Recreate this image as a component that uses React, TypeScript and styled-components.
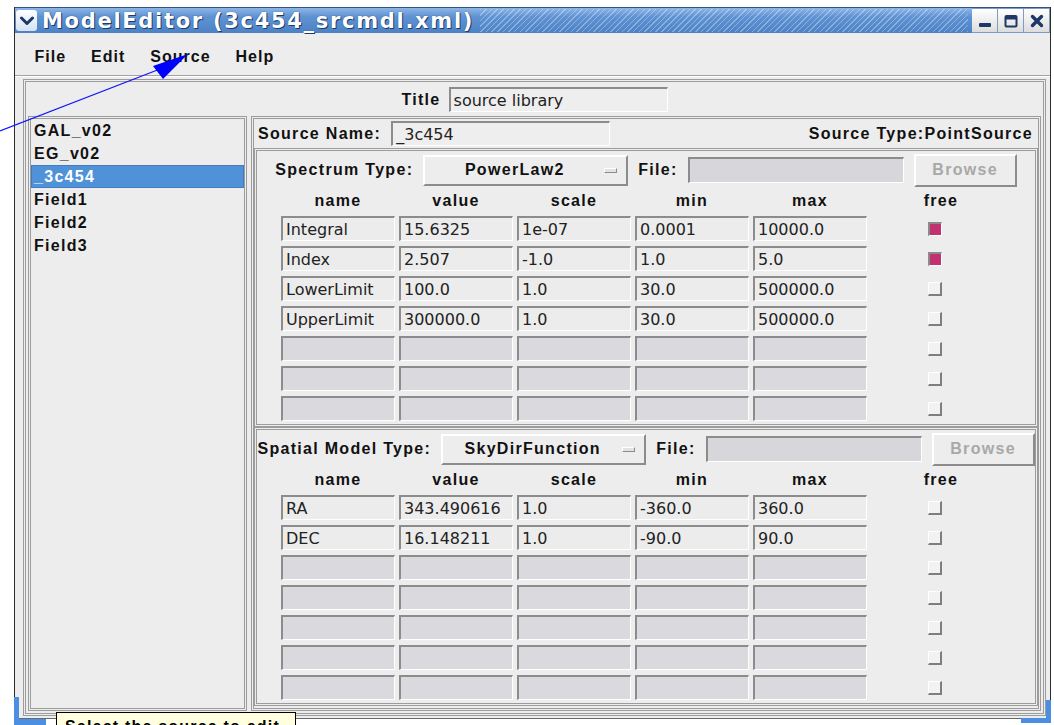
import React from "react";
import styled, { createGlobalStyle, css } from "styled-components";

const BOLD = `"Liberation Sans", Arial, Helvetica, sans-serif`;
const PLAIN = `"DejaVu Sans", "Liberation Sans", sans-serif`;
const PANEL = "#ededed";
const SHADE = "#8c8c8c";

const GlobalStyle = createGlobalStyle`
  html, body { margin: 0; padding: 0; background: #fff; }
  body { font-family: ${BOLD}; color: #111; }
  #root { width: 1054px; height: 725px; overflow: hidden; }
`;

const Screen = styled.div`
  position: relative;
  width: 1054px;
  height: 725px;
  overflow: hidden;
  background: #fff;
  padding: 7px 0 0 14px;
  box-sizing: border-box;
`;

const Window = styled.div`
  width: 1037px;
  height: 712px;
  display: flex;
  flex-direction: column;
  background: ${PANEL};
  border-left: 1px solid #2c2c2c;
  border-right: 1px solid #2c2c2c;
  border-bottom: 1px solid #6a6a6a;
  box-sizing: border-box;
`;

/* ---------- title bar ---------- */

const TitleBar = styled.div`
  flex: none;
  height: 26px;
  display: flex;
  align-items: center;
  background: linear-gradient(180deg, #8db6e6 0%, #5f92d2 35%, #4c82c5 100%);
  border-top: 1px solid #34557f;
  box-sizing: border-box;
`;

const SysMenuButton = styled.div`
  width: 21px;
  height: 21px;
  margin-left: 1px;
  display: flex;
  align-items: center;
  justify-content: center;
  background: linear-gradient(180deg, #ffffff, #d3e2f4);
  border-radius: 3px;
`;

const TitleText = styled.span`
  margin-left: 5px;
  font-family: "DejaVu Sans", Verdana, sans-serif;
  font-weight: bold;
  font-size: 21px;
  letter-spacing: 1.7px;
  color: #fff;
  text-shadow: 1px 1px 0 #1d3b68, 0 0 1px #1d3b68;
  white-space: nowrap;
`;

const Stripes = styled.div`
  flex: 1;
  align-self: stretch;
  margin: 1px 4px 1px 6px;
  background: repeating-linear-gradient(
    135deg,
    rgba(255, 255, 255, 0.32) 0 1px,
    rgba(255, 255, 255, 0) 1px 4px
  );
`;

const WinButtons = styled.div`
  display: flex;
  align-self: stretch;
  gap: 1px;
  padding: 1px 1px 1px 0;
  background: #7f9cc4;
`;

const WinButton = styled.div`
  width: 25px;
  display: flex;
  align-items: center;
  justify-content: center;
  background: linear-gradient(180deg, #ffffff, #dcdcdc);
`;

/* ---------- menu bar ---------- */

const MenuBar = styled.div`
  flex: none;
  height: 43px;
  box-sizing: border-box;
  padding: 5px 0 0 7px;
  display: flex;
  align-items: center;
  border-bottom: 1px solid #a2a2a2;
  box-shadow: 0 1px 0 #ffffff;
  margin-bottom: 1px;
`;

const MenuItem = styled.span`
  padding: 0 12.5px;
  font-family: ${BOLD};
  font-weight: bold;
  font-size: 16px;
  letter-spacing: 1px;
  color: #111;
`;

/* ---------- body ---------- */

const Frame = styled.div`
  flex: 1;
  min-height: 0;
  margin: 2px 4px 2px 8px;
  border: 3px double #9c9c9c;
  padding: 4px 2px 2px 2px;
  display: flex;
  flex-direction: column;
`;

const TitleRow = styled.div`
  flex: none;
  height: 27px;
  display: flex;
  align-items: center;
  justify-content: center;
  gap: 8px;
`;

const Label = styled.span`
  font-family: ${BOLD};
  font-weight: bold;
  font-size: 16px;
  letter-spacing: 1.3px;
  color: #111;
  white-space: nowrap;
`;

const sunken = css`
  border-style: solid;
  border-width: 2px 1px 1px 2px;
  border-color: ${SHADE} #ffffff #ffffff ${SHADE};
`;

const raised = css`
  border-style: solid;
  border-width: 2px;
  border-color: #ffffff ${SHADE} ${SHADE} #ffffff;
`;

const TextField = styled.div<{ $width: number }>`
  ${sunken};
  width: ${(p) => p.$width}px;
  height: 25px;
  box-sizing: border-box;
  background: #eeeeee;
  padding-left: 3px;
  display: flex;
  align-items: center;
  font-family: ${PLAIN};
  font-size: 16px;
  color: #222;
  white-space: nowrap;
  overflow: hidden;
`;

const Panels = styled.div`
  flex: 1;
  min-height: 0;
  margin-top: 3px;
  display: flex;
  gap: 4px;
`;

const ListPanel = styled.div`
  width: 219px;
  flex: none;
  border: 3px double #9c9c9c;
  box-sizing: border-box;
  display: flex;
  flex-direction: column;
`;

const ListItem = styled.div<{ $selected?: boolean }>`
  height: 23px;
  padding-left: 2px;
  display: flex;
  align-items: center;
  font-family: ${BOLD};
  font-weight: bold;
  font-size: 16px;
  letter-spacing: 1.3px;
  box-sizing: border-box;
  color: ${(p) => (p.$selected ? "#ffffff" : "#111")};
  background: ${(p) => (p.$selected ? "#4f92d8" : "transparent")};
  border: 1px solid ${(p) => (p.$selected ? "#3f7cc0" : "transparent")};
`;

const EditorPanel = styled.div`
  flex: 1;
  min-width: 0;
  border: 3px double #9c9c9c;
  display: flex;
  flex-direction: column;
`;

const SourceRow = styled.div`
  flex: none;
  height: 29px;
  display: flex;
  align-items: center;
  padding: 0 5px 0 4px;
  gap: 10px;
`;

const SourceType = styled(Label)`
  margin-left: auto;
`;

const Section = styled.div`
  flex: none;
  border: 3px double #9c9c9c;
  padding: 3px 0;
  display: flex;
  flex-direction: column;
`;

const TypeRow = styled.div`
  height: 32px;
  display: flex;
  align-items: center;
  justify-content: center;
  gap: 10px;
`;

const Dropdown = styled.div`
  ${raised};
  width: 205px;
  height: 31px;
  box-sizing: border-box;
  display: flex;
  align-items: center;
  padding-right: 9px;
`;

const DropText = styled(Label)`
  flex: 1;
  text-align: center;
`;

const DropMark = styled.span`
  width: 13px;
  height: 5px;
  box-sizing: border-box;
  border-style: solid;
  border-width: 1px;
  border-color: #ffffff ${SHADE} ${SHADE} #ffffff;
  background: #e2e2e2;
`;

const FileField = styled.div`
  ${sunken};
  width: 216px;
  height: 26px;
  box-sizing: border-box;
  background: #d6d6db;
`;

const BrowseButton = styled.div`
  ${raised};
  width: 103px;
  height: 33px;
  box-sizing: border-box;
  display: flex;
  align-items: center;
  justify-content: center;
  font-family: ${BOLD};
  font-weight: bold;
  font-size: 16px;
  letter-spacing: 1.3px;
  color: #a8a8a8;
`;

const gridColumns = css`
  display: grid;
  grid-template-columns: repeat(5, 114px) 140px;
  column-gap: 4px;
  justify-content: center;
`;

const HeaderGrid = styled.div`
  ${gridColumns};
  height: 28px;
  align-items: center;
  margin-bottom: 2px;
  padding-top: 2px;
  box-sizing: border-box;
`;

const HeaderCell = styled(Label)`
  text-align: center;
`;

const RowsGrid = styled.div`
  ${gridColumns};
  grid-auto-rows: 25px;
  row-gap: 5px;
`;

const Cell = styled.div<{ $empty?: boolean }>`
  ${sunken};
  box-sizing: border-box;
  background: ${(p) => (p.$empty ? "#d9d9de" : "#ececec")};
  padding-left: 3px;
  display: flex;
  align-items: center;
  font-family: ${PLAIN};
  font-size: 16px;
  color: #222;
  white-space: nowrap;
  overflow: hidden;
`;

const FreeCell = styled.div`
  display: flex;
  align-items: center;
  justify-content: center;
  padding-right: 12px;
`;

const CheckBox = styled.span<{ $checked?: boolean }>`
  width: 14px;
  height: 14px;
  box-sizing: border-box;
  ${(p) =>
    p.$checked
      ? css`
          border-style: solid;
          border-width: 2px 1px 1px 2px;
          border-color: #8a8a8a #ffffff #ffffff #8a8a8a;
          background: #c0336e;
        `
      : css`
          border-style: solid;
          border-width: 1px 2px 2px 1px;
          border-color: #ffffff #7e7e7e #7e7e7e #ffffff;
          background: #f2f2f2;
        `}
`;

/* ---------- overlays ---------- */

const Tooltip = styled.div`
  position: absolute;
  left: 56px;
  top: 712px;
  width: 240px;
  height: 24px;
  box-sizing: border-box;
  background: #ffffe0;
  border: 1px solid #000;
  padding: 5px 0 0 8px;
  font-family: ${BOLD};
  font-weight: bold;
  font-size: 16px;
  letter-spacing: 1.2px;
  line-height: 18px;
  color: #000;
  z-index: 3;
`;

const CornerGlow = styled.div<{ $side: "left" | "right" }>`
  position: absolute;
  z-index: 2;
  ${(p) =>
    p.$side === "left"
      ? css`
          left: 14px;
          top: 697px;
          width: 32px;
          height: 28px;
          border-left: 5px solid #4a8fe2;
          border-bottom: 6px solid #4a8fe2;
        `
      : css`
          left: 1021px;
          top: 700px;
          width: 30px;
          height: 23px;
          border-right: 5px solid #4a8fe2;
          border-bottom: 5px solid #4a8fe2;
        `}
  box-sizing: border-box;
`;

const Pointer = styled.svg`
  position: absolute;
  left: 0;
  top: 0;
  pointer-events: none;
  z-index: 4;
`;

/* ---------- data ---------- */

type Param = {
  name?: string;
  value?: string;
  scale?: string;
  min?: string;
  max?: string;
  free?: boolean;
};

const spectrumParams: Param[] = [
  { name: "Integral", value: "15.6325", scale: "1e-07", min: "0.0001", max: "10000.0", free: true },
  { name: "Index", value: "2.507", scale: "-1.0", min: "1.0", max: "5.0", free: true },
  { name: "LowerLimit", value: "100.0", scale: "1.0", min: "30.0", max: "500000.0" },
  { name: "UpperLimit", value: "300000.0", scale: "1.0", min: "30.0", max: "500000.0" },
  {},
  {},
  {},
];

const spatialParams: Param[] = [
  { name: "RA", value: "343.490616", scale: "1.0", min: "-360.0", max: "360.0" },
  { name: "DEC", value: "16.148211", scale: "1.0", min: "-90.0", max: "90.0" },
  {},
  {},
  {},
  {},
  {},
];

const columns = ["name", "value", "scale", "min", "max", "free"];
const fields: (keyof Param)[] = ["name", "value", "scale", "min", "max"];
const sources = ["GAL_v02", "EG_v02", "_3c454", "Field1", "Field2", "Field3"];

function ParamSection({ label, model, params }: { label: string; model: string; params: Param[] }) {
  return (
    <Section>
      <TypeRow>
        <Label>{label}</Label>
        <Dropdown>
          <DropText>{model}</DropText>
          <DropMark />
        </Dropdown>
        <Label>File:</Label>
        <FileField />
        <BrowseButton>Browse</BrowseButton>
      </TypeRow>
      <HeaderGrid>
        {columns.map((c) => (
          <HeaderCell key={c}>{c}</HeaderCell>
        ))}
      </HeaderGrid>
      <RowsGrid>
        {params.map((p, i) => (
          <React.Fragment key={i}>
            {fields.map((f) => (
              <Cell key={f} $empty={p.name === undefined}>
                {p[f] as string | undefined}
              </Cell>
            ))}
            <FreeCell>
              <CheckBox $checked={p.free} />
            </FreeCell>
          </React.Fragment>
        ))}
      </RowsGrid>
    </Section>
  );
}

export default function App() {
  return (
    <Screen>
      <GlobalStyle />
      <Window>
        <TitleBar>
          <SysMenuButton>
            <svg width="14" height="10" viewBox="0 0 14 10">
              <path d="M1.5 2 L7 7.5 L12.5 2" fill="none" stroke="#1d3766" strokeWidth="3" strokeLinecap="round" strokeLinejoin="round" />
            </svg>
          </SysMenuButton>
          <TitleText>ModelEditor (3c454_srcmdl.xml)</TitleText>
          <Stripes />
          <WinButtons>
            <WinButton>
              <svg width="14" height="14" viewBox="0 0 14 14">
                <rect x="1" y="9" width="12" height="4" rx="1" fill="#1d3766" />
              </svg>
            </WinButton>
            <WinButton>
              <svg width="14" height="14" viewBox="0 0 14 14">
                <rect x="1.5" y="2" width="11" height="10.5" rx="1" fill="none" stroke="#1d3766" strokeWidth="2" />
                <rect x="1.5" y="2" width="11" height="3.5" fill="#1d3766" />
              </svg>
            </WinButton>
            <WinButton>
              <svg width="14" height="14" viewBox="0 0 14 14">
                <path d="M2.5 2.5 L11.5 11.5 M11.5 2.5 L2.5 11.5" stroke="#1d3766" strokeWidth="3.4" strokeLinecap="round" />
              </svg>
            </WinButton>
          </WinButtons>
        </TitleBar>

        <MenuBar>
          <MenuItem>File</MenuItem>
          <MenuItem>Edit</MenuItem>
          <MenuItem>Source</MenuItem>
          <MenuItem>Help</MenuItem>
        </MenuBar>

        <Frame>
          <TitleRow>
            <Label>Title</Label>
            <TextField $width={219}>source library</TextField>
          </TitleRow>
          <Panels>
            <ListPanel>
              {sources.map((s) => (
                <ListItem key={s} $selected={s === "_3c454"}>
                  {s}
                </ListItem>
              ))}
            </ListPanel>
            <EditorPanel>
              <SourceRow>
                <Label>Source Name:</Label>
                <TextField $width={219}>_3c454</TextField>
                <SourceType>Source Type:PointSource</SourceType>
              </SourceRow>
              <ParamSection label="Spectrum Type:" model="PowerLaw2" params={spectrumParams} />
              <ParamSection label="Spatial Model Type:" model="SkyDirFunction" params={spatialParams} />
            </EditorPanel>
          </Panels>
        </Frame>
      </Window>

      <CornerGlow $side="left" />
      <CornerGlow $side="right" />
      <Tooltip>Select the source to edit</Tooltip>

      <Pointer width="1054" height="725" viewBox="0 0 1054 725">
        <line x1="0" y1="131" x2="160" y2="69" stroke="#1414ff" strokeWidth="1.2" />
        <polygon points="188,54 153,66 163,79" fill="#0000ff" />
      </Pointer>
    </Screen>
  );
}
